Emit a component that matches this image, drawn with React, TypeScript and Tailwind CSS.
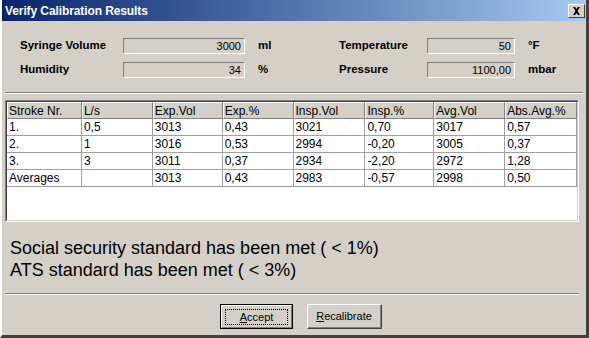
import React from "react";

const rows = [
  ["1.", "0,5", "3013", "0,43", "3021", "0,70", "3017", "0,57"],
  ["2.", "1", "3016", "0,53", "2994", "-0,20", "3005", "0,37"],
  ["3.", "3", "3011", "0,37", "2934", "-2,20", "2972", "1,28"],
  ["Averages", "", "3013", "0,43", "2983", "-0,57", "2998", "0,50"],
];

const headers = ["Stroke Nr.", "L/s", "Exp.Vol", "Exp.%", "Insp.Vol", "Insp.%", "Avg.Vol", "Abs.Avg.%"];
const widths = ["w-[75px]", "w-[71px]", "w-[70px]", "w-[71px]", "w-[72px]", "w-[69px]", "w-[71px]", "w-[72px]"];

const ReadOnlyBox = ({ value, width }: { value: string; width: string }) => (
  <div
    className={`${width} h-[16px] bg-[#d4d0c8] border-t border-l border-[#808080] border-b-white border-r-white border-b border-r flex items-center justify-end pr-[3px] text-[11px] text-black`}
  >
    {value}
  </div>
);

const Field = ({ label, value, unit, labelW, boxW, unitW }: { label: string; value: string; unit: string; labelW: string; boxW: string; unitW: string }) => (
  <div className="flex items-center h-[16px]">
    <span className={`${labelW} font-bold text-[11.5px]`}>{label}</span>
    <ReadOnlyBox value={value} width={boxW} />
    <span className={`${unitW} pl-[13px] font-bold text-[11.5px]`}>{unit}</span>
  </div>
);

const Btn = ({ label, focused }: { label: string; focused?: boolean }) => {
  const first = label[0];
  const rest = label.slice(1);
  return (
    <button
      className={`h-[25px] text-[11px] bg-[#d4d0c8] flex items-center justify-center ${
        focused
          ? "w-[73px] border border-black"
          : "w-[75px] border-t border-l border-white border-r border-b border-r-[#404040] border-b-[#404040]"
      }`}
    >
      {focused ? (
        <span className="w-full h-full border-t border-l border-white border-r border-b border-r-[#808080] border-b-[#808080] flex items-center justify-center">
          <span className="border border-dotted border-black px-[14px] leading-[14px]">
            <span className="underline">{first}</span>
            {rest}
          </span>
        </span>
      ) : (
        <span className="w-full h-full border-r border-b border-[#808080] border-t-0 border-l-0 flex items-center justify-center">
          <span>
            <span className="underline">{first}</span>
            {rest}
          </span>
        </span>
      )}
    </button>
  );
};

export default function App() {
  return (
    <div
      className="w-[589px] h-[338px] bg-[#d4d0c8] border-l-2 border-l-white border-r-[3px] border-r-[#404040] border-b-[3px] border-b-[#404040] flex flex-col text-black overflow-hidden"
      style={{ fontFamily: '"Liberation Sans", Arial, sans-serif' }}
    >
      {/* title bar */}
      <div className="h-[21px] bg-gradient-to-r from-[#0a246a] to-[#a6caf0] flex items-center justify-between pl-[3px] pr-[1px] shrink-0">
        <span className="text-white font-bold text-[12px] tracking-[-0.1px]">
          Verify Calibration Results
        </span>
        <div className="w-[17px] h-[14px] bg-[#d4d0c8] border-t border-l border-white border-r border-b border-r-[#404040] border-b-[#404040] flex items-center justify-center">
          <svg width="9" height="8" viewBox="0 0 9 8">
            <path d="M1 0h2l1.5 2 1.5-2h2L5.5 4 8 8H6L4.5 6 3 8H1l2.5-4z" fill="#000" />
          </svg>
        </div>
      </div>

      {/* parameters */}
      <div className="pl-[18px] pt-[17px] flex flex-col gap-[8px]">
        <div className="flex">
          <Field label="Syringe Volume" value="3000" unit="ml" labelW="w-[103px]" boxW="w-[122px]" unitW="w-[94px]" />
          <Field label="Temperature" value="50" unit="°F" labelW="w-[88px]" boxW="w-[88px]" unitW="w-[60px]" />
        </div>
        <div className="flex">
          <Field label="Humidity" value="34" unit="%" labelW="w-[103px]" boxW="w-[122px]" unitW="w-[94px]" />
          <Field label="Pressure" value="1100,00" unit="mbar" labelW="w-[88px]" boxW="w-[88px]" unitW="w-[60px]" />
        </div>
      </div>

      <div className="mx-[3px] mt-[14px] border-t border-t-[#808080] border-b border-b-white" />

      {/* table */}
      <div className="ml-[3px] mr-[7px] mt-[6px] h-[122px] shrink-0 border-t border-l border-[#808080] border-b border-r border-b-white border-r-white">
        <div className="w-full h-full border-t border-l border-[#404040] border-b border-r border-b-[#d4d0c8] border-r-[#d4d0c8] bg-white text-[12px]">
          <div className="flex h-[17px]">
            {headers.map((h, i) => (
              <div
                key={h}
                className={`${widths[i]} bg-[#d4d0c8] border-t border-l border-white border-r border-b border-r-[#808080] border-b-[#808080] pl-[1px] flex items-center`}
              >
                {h}
              </div>
            ))}
          </div>
          {rows.map((r, ri) => (
            <div key={ri} className="flex h-[17px]">
              {r.map((c, ci) => (
                <div key={ci} className={`${widths[ci]} border-r border-b border-[#a0a0a0] pl-[2px] flex items-center`}>
                  {c}
                </div>
              ))}
            </div>
          ))}
        </div>
      </div>

      {/* status */}
      <div className="pl-[8px] pt-[15px] text-[18px] leading-[22px]" style={{ fontFamily: "Arial, 'Liberation Sans', sans-serif" }}>
        <p>Social security standard has been met ( &lt; 1%)</p>
        <p>ATS standard has been met ( &lt; 3%)</p>
      </div>

      <div className="ml-[3px] mr-[7px] mt-[12px] border-t border-t-[#808080] border-b border-b-white" />

      <div className="flex justify-center gap-[14px] mt-[9px] pl-[14px]">
        <Btn label="Accept" focused />
        <Btn label="Recalibrate" />
      </div>
    </div>
  );
}
